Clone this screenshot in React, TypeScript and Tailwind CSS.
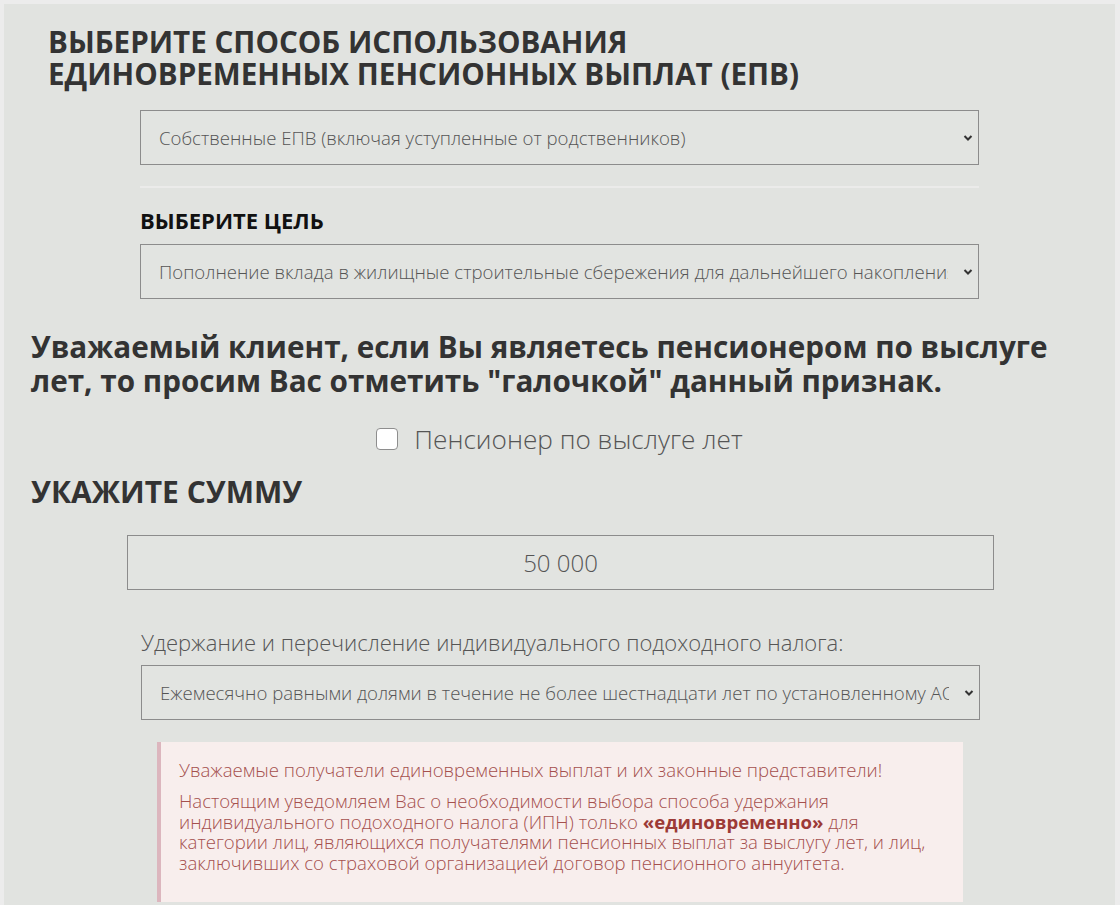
import React from 'react';

const Chevron: React.FC = () => (
  <svg
    className="pointer-events-none absolute right-[5px] top-1/2 -translate-y-1/2"
    width="12"
    height="8"
    viewBox="0 0 12 8"
    fill="none"
  >
    <polyline points="2.5,2 6,5.5 9.5,2" stroke="#333" strokeWidth="2" />
  </svg>
);

interface SelectProps {
  value: string;
  className?: string;
}

const Select: React.FC<SelectProps> = ({ value, className = '' }) => (
  <div className={`relative ${className}`}>
    <select
      defaultValue={value}
      className="w-full h-[55px] appearance-none border border-[#8c8c8c] bg-[#e2e4e1] pl-[18px] pr-[30px] text-[18.6px] font-light text-[#555] outline-none"
    >
      <option value={value}>{value}</option>
    </select>
    <Chevron />
  </div>
);

export default function App() {
  return (
    <div className="h-[905px] w-full overflow-hidden bg-[#ececec] pl-[4px] pt-[4px] pr-[5px] font-['Open_Sans',sans-serif]">
      <div className="bg-[#e1e3e0] min-h-full">
        {/* method */}
        <div className="pl-[44px] pt-[22px] pb-[21px]">
          <h1 className="text-[29.6px] leading-[32px] font-bold text-[#333] uppercase">
            Выберите способ использования
            <br />
            единовременных пенсионных выплат (ЕПВ)
          </h1>
          <div className="ml-[92px] w-[839px] mt-[20px]">
            <Select value="Собственные ЕПВ (включая уступленные от родственников)" />
            <div className="mt-[21px] h-[2px] bg-[#ebebea]" />
            <h2 className="mt-[17px] text-[22px] leading-[30px] font-bold text-[#111] uppercase">
              Выберите цель
            </h2>
            <Select
              className="mt-[9px]"
              value="Пополнение вклада в жилищные строительные сбережения для дальнейшего накопления"
            />
          </div>
        </div>

        {/* pensioner */}
        <div className="pl-[27px] pr-[20px] pt-[10px]">
          <p className="text-[29.7px] leading-[34px] font-bold text-[#333]">
            Уважаемый клиент, если Вы являетесь пенсионером по выслуге лет, то просим Вас отметить "галочкой"
            данный признак.
          </p>
          <label className="mt-[24px] flex items-center justify-center gap-[16px] pr-[7px]">
            <span className="h-[22px] w-[22px] rounded-[4px] border border-[#8e8e8e] bg-white" />
            <span className="text-[26.2px] leading-[34px] font-light text-[#555]">Пенсионер по выслуге лет</span>
          </label>
          <h2 className="mt-[16px] text-[30px] leading-[40px] font-bold text-[#333] uppercase">Укажите сумму</h2>
        </div>

        {/* sum */}
        <div className="mt-[23px] flex justify-center pl-[2px]">
          <input
            defaultValue="50 000"
            className="h-[55px] w-[867px] border border-[#8c8c8c] bg-[#e2e4e1] text-center text-[24px] font-light text-[#555] outline-none"
          />
        </div>

        <div className="ml-[137px] w-[839px]">
          <div className="mt-[37px] text-[22px] leading-[30px] font-light text-[#555]">
            Удержание и перечисление индивидуального подоходного налога:
          </div>
          <Select
            className="mt-[8px]"
            value="Ежемесячно равными долями в течение не более шестнадцати лет по установленному АО"
          />
        </div>

        {/* notice */}
        <div className="ml-[153px] mt-[22px] w-[806px] border-l-[4px] border-[#dcb6be] bg-[#f8eeed] pl-[18px] pr-[24px] pt-[16px] pb-[28px] text-[18.6px] font-light text-[#a5504d]">
          <p className="leading-[24px]">Уважаемые получатели единовременных выплат и их законные представители!</p>
          <p className="mt-[9px] leading-[20.7px]">
            Настоящим уведомляем Вас о необходимости выбора способа удержания индивидуального подоходного налога
            (ИПН) только <b className="font-bold text-[#9c3a36]">«единовременно»</b> для категории лиц, являющихся
            получателями пенсионных выплат за выслугу лет, и лиц, заключивших со страховой организацией договор
            пенсионного аннуитета.
          </p>
        </div>
      </div>
    </div>
  );
}
